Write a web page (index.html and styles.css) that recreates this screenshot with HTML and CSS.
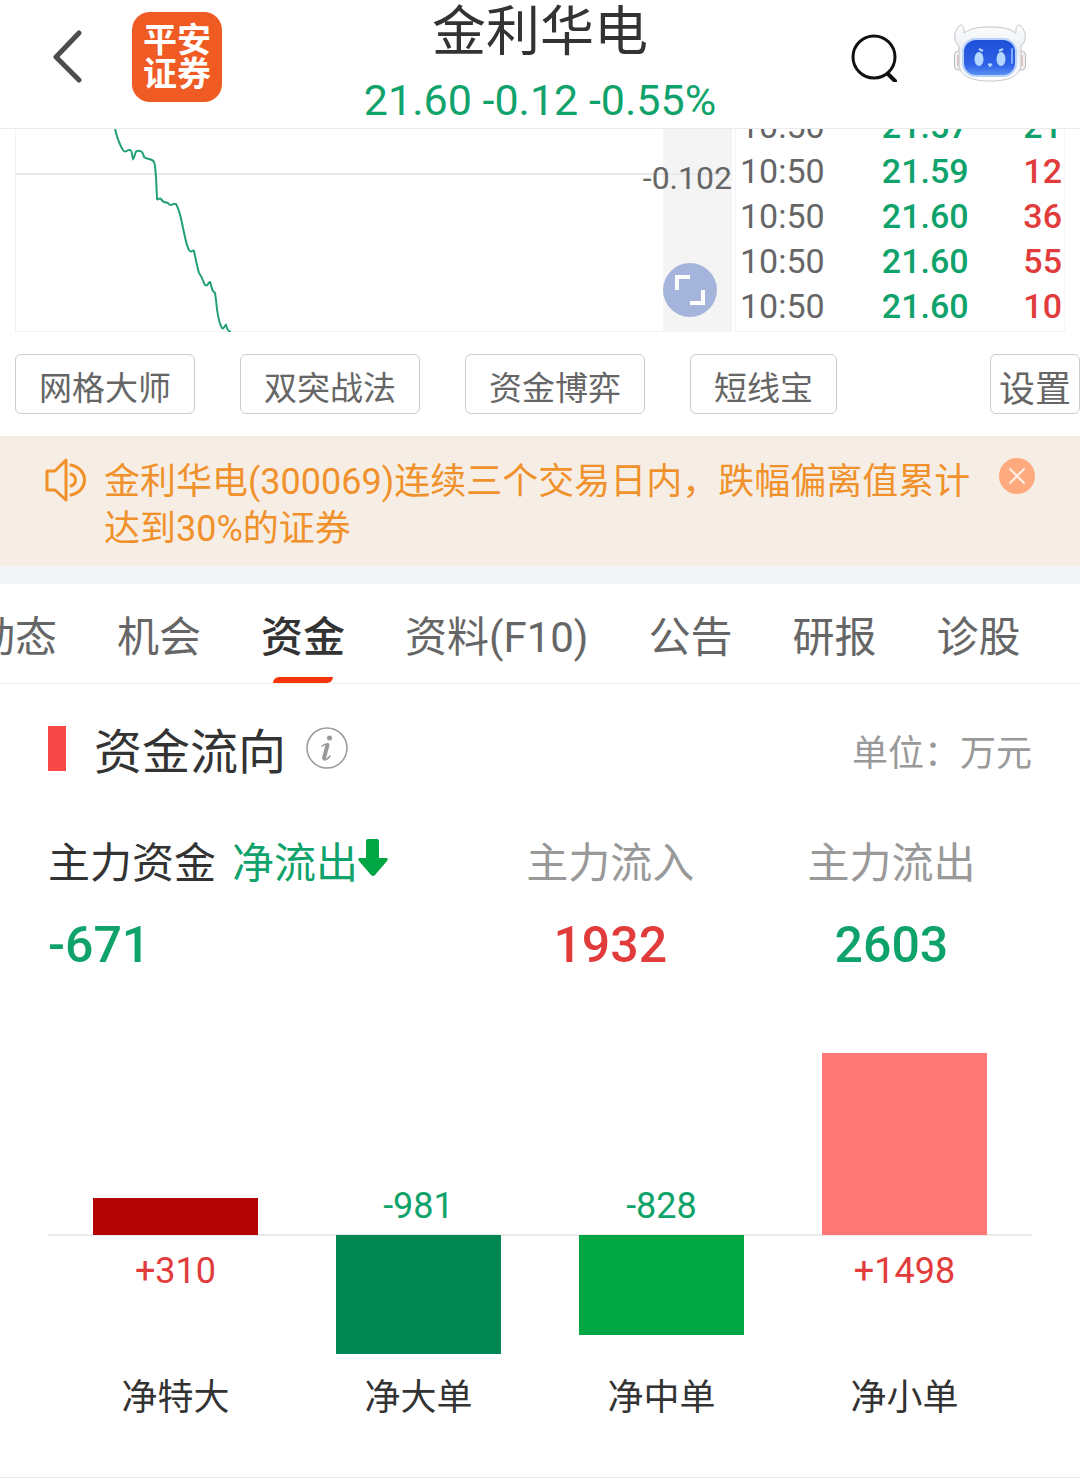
FILE: index.html
```html
<!DOCTYPE html>
<html lang="zh-CN">
<head>
    <meta charset="UTF-8">
    <meta name="viewport" content="width=device-width, initial-scale=1">
    <title>金利华电</title>
    <link rel="stylesheet" href="styles.css">
</head>
<body>
<header class="header">
    <div class="header-left">
        <button class="icon-btn" aria-label="返回">
            <svg width="30" height="54" viewBox="0 0 30 54"><path d="M27 3L4 27l23 23" fill="none" stroke="#4c4c4c" stroke-width="5" stroke-linecap="round" stroke-linejoin="round"/></svg>
        </button>
        <a href="#" class="logo"><span>平安</span><span>证券</span></a>
    </div>
    <div class="stock">
        <h1>金利华电</h1>
        <p class="green">21.60 -0.12 -0.55%</p>
    </div>
    <div class="header-right">
        <button class="icon-btn" aria-label="搜索">
            <svg width="48" height="50" viewBox="0 0 48 50" fill="none" stroke="#111" stroke-width="3"><circle cx="23" cy="25" r="21"/><path d="M37 42l7 7" stroke-width="4" stroke-linecap="round"/></svg>
        </button>
        <button class="icon-btn" aria-label="智能助手">
            <svg width="74" height="66" viewBox="0 0 74 66">
                <defs>
                    <linearGradient id="face" x1="0" y1="0" x2="0" y2="1"><stop offset="0" stop-color="#1e4fd8"/><stop offset=".7" stop-color="#2f62e6"/><stop offset="1" stop-color="#5e93f2"/></linearGradient>
                    <linearGradient id="shell" x1="0" y1="0" x2="0" y2="1"><stop offset="0" stop-color="#fdfdfd"/><stop offset=".5" stop-color="#e9edf3"/><stop offset="1" stop-color="#fff"/></linearGradient>
                </defs>
                <rect x="1.500" y="27" width="9" height="19" rx="4" fill="#f4f2f3" stroke="#bbb"/>
                <rect x="63.500" y="27" width="9" height="19" rx="4" fill="#f4f2f3" stroke="#bbb"/>
                <path d="M5 31v11M69 31v11" stroke="#e3c4c2" stroke-width="2"/>
                <path d="M7 1C0 8 0 17 6 22v20c2 10 12 15 31 15s29-5 31-15V22c6-5 6-14-1-21-4 0-4 3-4 8C56 4 48 3 37 3S18 4 11 9C11 4 11 1 7 1z" fill="url(#shell)" stroke="#c3c5c8"/>
                <rect x="10" y="15" width="53" height="37" rx="13" fill="url(#face)" stroke="#b9d2fb" stroke-width="2"/>
                <ellipse cx="26" cy="35" rx="4.500" ry="7" fill="#b5d6ff"/>
                <ellipse cx="48" cy="35" rx="4.500" ry="7" fill="#b5d6ff"/>
                <path d="M26 25l4 2M46 27l4-2" stroke="#b5d6ff" stroke-width="2"/>
                <path d="M35 40h4l-2 3z" fill="#b5d6ff" stroke="#b5d6ff"/>
                <path d="M59 25v14" stroke="#7fa8f7" stroke-width="2" stroke-linecap="round"/>
            </svg>
        </button>
    </div>
</header>

<section class="quote">
    <div class="trend">
        <svg class="trend-line" viewBox="0 0 716 203" preserveAspectRatio="none">
            <rect x="647" y="0" width="69" height="203" fill="#f4f4f4"/>
            <path d="M0 45H716" stroke="#e9e9e9" stroke-width="2"/>
            <path d="M99 0c2 8 4 15 8 21 3 4 4-1 7 0 2 0 2 6 3 9 2-2 2-8 4-8 5-1 6 2 7 6 3 3 8 1 10 5 2 5 1 9 2 14l1 23c1 2 2-2 4 0 2 4 5 3 7 4 3 5 5-1 8 1 4 7 5 14 7 24 2 8 3 17 6 22 3 4 3-1 5 1 2 10 3 15 5 22 4 5 4 9 6 12 3 2 3-3 5-3 2 4 1 9 5 11l1 7c1 11 2 20 5 26 2 6 3 0 5-1 1 4 2 7 5 7" fill="none" stroke="#21a073" stroke-width="2"/>
        </svg>
        <span class="trend-label">-0.102</span>
        <button class="expand" aria-label="全屏">
            <svg width="30" height="30" viewBox="0 0 30 30"><path d="M2 15V2h13M28 15v13H15" fill="none" stroke="#fff" stroke-width="4"/></svg>
        </button>
    </div>
    <div class="ticks">
        <table>
            <tr><td>10:50</td><td class="green">21.57</td><td class="green">21</td></tr>
            <tr><td>10:50</td><td class="green">21.59</td><td class="red">12</td></tr>
            <tr><td>10:50</td><td class="green">21.60</td><td class="red">36</td></tr>
            <tr><td>10:50</td><td class="green">21.60</td><td class="red">55</td></tr>
            <tr><td>10:50</td><td class="green">21.60</td><td class="red">10</td></tr>
        </table>
    </div>
</section>

<div class="tools">
    <button>网格大师</button>
    <button>双突战法</button>
    <button>资金博弈</button>
    <button>短线宝</button>
    <button class="setting">设置</button>
</div>

<div class="notice">
    <svg class="horn" width="42" height="44" viewBox="0 0 42 44" fill="none" stroke="#f0912c" stroke-width="3" stroke-linejoin="round" stroke-linecap="round"><path d="M2 13h8L21 2v40L10 32H2z"/><path d="M26 7c18 4 18 26 0 30M26 16c6 2 6 10 0 12"/></svg>
    <p>金利华电(300069)连续三个交易日内，跌幅偏离值累计达到30%的证券</p>
    <button class="icon-btn" aria-label="关闭">
        <svg width="36" height="36" viewBox="0 0 36 36"><circle cx="18" cy="18" r="18" fill="#ffa97e"/><path d="M11 11l14 14M25 11L11 25" stroke="#fff1e8" stroke-width="2" stroke-linecap="round"/></svg>
    </button>
</div>

<nav class="tabs">
    <a href="#">动态</a>
    <a href="#">机会</a>
    <a href="#" class="current">资金</a>
    <a href="#">资料(F10)</a>
    <a href="#">公告</a>
    <a href="#">研报</a>
    <a href="#">诊股</a>
</nav>

<main class="fund">
    <div class="fund-title">
        <h2>资金流向</h2>
        <button class="icon-btn" aria-label="说明">
            <svg width="42" height="42" viewBox="0 0 42 42"><circle cx="21" cy="21" r="20" fill="none" stroke="#999" stroke-width="1.500"/><circle cx="23.500" cy="11" r="2.500" fill="#999"/><path d="M16 19q3-2 5-2" fill="none" stroke="#999" stroke-width="1.500" stroke-linecap="round"/><path d="M21.500 18l-3.500 13" fill="none" stroke="#999" stroke-width="4" stroke-linecap="round"/><path d="M18 33q3 0 6-4" fill="none" stroke="#999" stroke-width="1.500" stroke-linecap="round"/></svg>
        </button>
        <span class="unit">单位：万元</span>
    </div>

    <dl class="summary">
        <div>
            <dt>主力资金<span class="green flow">净流出</span><svg width="30" height="38" viewBox="0 0 30 38"><path d="M8 2q0-2 2-2h9q2 0 2 2v17h7q3 0 1 3L17 36q-2 2-4 0L1 22q-2-3 1-3h6z" fill="#00a544"/></svg></dt>
            <dd class="green">-671</dd>
        </div>
        <div>
            <dt>主力流入</dt>
            <dd class="red">1932</dd>
        </div>
        <div>
            <dt>主力流出</dt>
            <dd class="green">2603</dd>
        </div>
    </dl>

    <div class="bars">
        <div class="col">
            <div class="up"><i class="dark-red" style="height: 37px"></i></div>
            <div class="down"><span class="red">+310</span></div>
            <p>净特大</p>
        </div>
        <div class="col">
            <div class="up"><span class="green">-981</span></div>
            <div class="down"><i class="dark-green" style="height: 119px"></i></div>
            <p>净大单</p>
        </div>
        <div class="col">
            <div class="up"><span class="green">-828</span></div>
            <div class="down"><i class="light-green" style="height: 100px"></i></div>
            <p>净中单</p>
        </div>
        <div class="col">
            <div class="up"><i class="light-red" style="height: 182px"></i></div>
            <div class="down"><span class="red">+1498</span></div>
            <p>净小单</p>
        </div>
    </div>
</main>
</body>
</html>
```

FILE: styles.css
```css
* {
    margin: 0;
    padding: 0;
    box-sizing: border-box;
}

body {
    font-family: Roboto, "Noto Sans CJK SC", sans-serif;
    color: #333;
    background: #fff;
}

a {
    color: inherit;
    text-decoration: none;
}

button {
    font-family: inherit;
    background: none;
    border: 0;
    cursor: pointer;
}

svg {
    display: block;
}

.icon-btn {
    flex: none;
}

.green {
    color: #0fa36b;
}

.red {
    color: #e23b3b;
}

/* 顶部 */
.header {
    display: grid;
    grid-template-columns: 1fr auto 1fr;
    height: 129px;
    border-bottom: 1px solid #ebebeb;
}

.header-left,
.header-right {
    display: flex;
    align-items: center;
    height: 114px;
}

.header-left {
    padding-left: 52px;
    gap: 50px;
}

.header-right {
    justify-content: flex-end;
    padding-right: 53px;
    gap: 54px;
}

.logo {
    display: flex;
    flex-direction: column;
    justify-content: center;
    width: 90px;
    height: 90px;
    border-radius: 18px;
    background: #f05a23;
    color: #fff;
    font-size: 34px;
    font-weight: 700;
    line-height: 34px;
    text-align: center;
}

.stock {
    text-align: center;
}

.stock h1 {
    font-size: 54px;
    font-weight: 400;
    line-height: 66px;
}

.stock p {
    font-size: 43px;
    line-height: 68px;
}

/* 分时 + 明细 */
.quote {
    display: flex;
    height: 203px;
    padding: 0 15px;
    gap: 3px;
    overflow: hidden;
}

.trend {
    position: relative;
    flex: 1;
    border-left: 1px solid #f2f2f2;
    border-bottom: 1px solid #f2f2f2;
}

.trend-line {
    width: 100%;
    height: 203px;
}

.trend-label {
    position: absolute;
    right: 0;
    top: 30px;
    font-size: 32px;
    line-height: 38px;
    color: #666;
}

.expand {
    position: absolute;
    right: 15px;
    bottom: 14px;
    display: flex;
    align-items: center;
    justify-content: center;
    width: 54px;
    height: 54px;
    border-radius: 50%;
    background: #a5b4da;
}

.ticks {
    display: flex;
    align-items: flex-end;
    width: 330px;
    padding: 0 2px 2px 4px;
    border: 1px solid #f5f5f5;
    border-top: 0;
}

.ticks table {
    width: 100%;
    table-layout: fixed;
    border-collapse: collapse;
    font-size: 34px;
    color: #666;
}

.ticks td {
    width: 29%;
    height: 45px;
    line-height: 45px;
}

.ticks td:nth-child(2) {
    width: 42%;
    text-align: right;
}

.ticks td:last-child {
    text-align: right;
}

.ticks .green,
.ticks .red {
    font-weight: 500;
}

/* 工具按钮 */
.tools {
    display: flex;
    gap: 45px;
    padding: 22px 0 22px 15px;
}

.tools button {
    height: 60px;
    padding: 3px 23px 0;
    border: 1px solid #ccc;
    border-radius: 6px;
    font-size: 33px;
    color: #666;
    white-space: nowrap;
}

.tools .setting {
    margin-left: auto;
    padding: 3px 8px 0;
    font-size: 36px;
}

/* 公告条 */
.notice {
    display: flex;
    align-items: flex-start;
    padding: 22px 45px 13px;
    background: #f6eee4;
    border-bottom: 18px solid #f3f4f8;
}

.notice .horn {
    flex: none;
}

.notice p {
    flex: 1;
    margin: 0 14px 0 17px;
    padding-top: 1px;
    font-size: 36px;
    line-height: 47px;
    color: #f0912c;
}

/* 标签页 */
.tabs {
    display: flex;
    gap: 60px;
    height: 100px;
    margin-left: -27px;
    border-bottom: 1px solid #f0f0f0;
    font-size: 42px;
    line-height: 108px;
    color: #666;
    white-space: nowrap;
}

.tabs a {
    position: relative;
    height: 99px;
}

.tabs .current {
    font-weight: 500;
    color: #333;
}

.tabs .current::after {
    content: "";
    position: absolute;
    left: 12px;
    right: 12px;
    bottom: 0;
    height: 6px;
    border-radius: 6px 0;
    background: #fb3408;
}

/* 资金流向 */
.fund {
    padding: 39px 48px 52px;
    border-bottom: 1px solid #e8e8e8;
}

.fund-title {
    display: flex;
    align-items: center;
    height: 50px;
}

.fund-title::before {
    content: "";
    width: 18px;
    height: 45px;
    margin-right: 28px;
    background: #f84848;
}

.fund-title h2 {
    margin-right: 20px;
    font-size: 48px;
    font-weight: 400;
}

.unit {
    margin-left: auto;
    padding-top: 3px;
    font-size: 36px;
    color: #999;
}

.summary {
    display: grid;
    grid-template-columns: 3fr 2fr 2fr;
    margin-top: 61px;
    text-align: center;
}

.summary div:first-child {
    text-align: left;
}

.summary dt {
    font-size: 42px;
    line-height: 60px;
    color: #999;
}

.summary div:first-child dt {
    display: flex;
    color: #333;
}

.summary .flow {
    margin-left: 16px;
}

.summary dt svg {
    margin-top: 5px;
}

.summary dd {
    margin-top: 21px;
    font-size: 50px;
    font-weight: 500;
    line-height: 60px;
}

/* 柱状图 */
.bars {
    position: relative;
    display: grid;
    grid-template-columns: repeat(4, 1fr);
    margin-top: 78px;
    padding: 0 6px;
    font-size: 36px;
    text-align: center;
}

.bars::before {
    content: "";
    position: absolute;
    left: 0;
    right: 0;
    top: 181px;
    height: 2px;
    background: #ebebeb;
}

.col {
    position: relative;
}

.up,
.down {
    display: flex;
    flex-direction: column;
    align-items: center;
}

.up {
    justify-content: flex-end;
    height: 182px;
}

.down {
    height: 119px;
}

.col i {
    width: 165px;
}

.col span {
    line-height: 44px;
}

.up span {
    padding-bottom: 7px;
}

.down span {
    padding-top: 14px;
}

.col p {
    margin-top: 17px;
    line-height: 54px;
}

.dark-red {
    background: #b40404;
}

.dark-green {
    background: #008753;
}

.light-green {
    background: #00a544;
}

.light-red {
    background: #ff7777;
}
```
